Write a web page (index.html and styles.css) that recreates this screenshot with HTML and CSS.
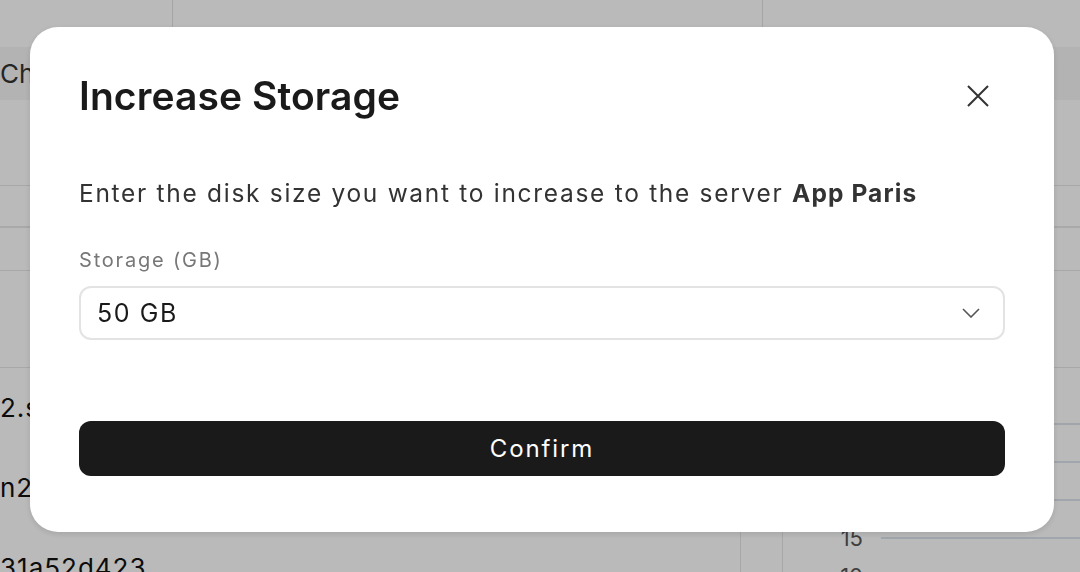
FILE: index.html
```html
<!DOCTYPE html>
<html>

<head>
  <meta charset="utf-8" name="viewport" content="width=device-width, initial-scale=1">
  <title>Increase Storage</title>
  <link rel="stylesheet" href="styles.css">
</head>

<body>
  <div class="backdrop">
    <div class="bgTop">
      <div class="bgCol first"></div>
      <div class="bgCol second"></div>
      <div class="bgCol"></div>
    </div>
    <div class="bgHead">Ch</div>
    <div class="bgRow tall"></div>
    <div class="bgRow strong"></div>
    <div class="bgRow"></div>
    <div class="bgRow big"></div>
    <div class="bgLower">
      <div class="bgList">
        <div class="bgItem">2.s</div>
        <div class="bgItem">n2.</div>
        <div class="bgItem">31a52d423</div>
      </div>
      <div class="bgGap"></div>
      <div class="bgChart">
        <div class="tick"><span>30</span><i></i></div>
        <div class="tick"><span>25</span><i></i></div>
        <div class="tick"><span>20</span><i></i></div>
        <div class="tick"><span>15</span><i></i></div>
        <div class="tick"><span>10</span><i></i></div>
      </div>
    </div>
  </div>

  <div class="overlay">
    <div class="modal">
      <div class="modalHeader">
        <h2 class="modalTitle">Increase Storage</h2>
        <button class="closeBtn" type="button">
          <svg width="22" height="22" viewBox="0 0 22 22" fill="none" stroke="#333" stroke-width="2">
            <path d="M1 1L21 21M21 1L1 21" />
          </svg>
        </button>
      </div>
      <p class="modalText">Enter the disk size you want to increase to the server <b>App Paris</b></p>
      <label class="fieldLabel">Storage (GB)</label>
      <div class="selectBox">
        <span>50 GB</span>
        <svg width="18" height="10" viewBox="0 0 18 10" fill="none" stroke="#555" stroke-width="1.6">
          <path d="M1 1L9 9L17 1" />
        </svg>
      </div>
      <button class="confirmBtn" type="button">Confirm</button>
    </div>
  </div>
</body>

</html>
```

FILE: styles.css
```css
body {
  margin: 0;
  background-color: white;
  font-family: Inter, "Liberation Sans", sans-serif;
  overflow: hidden;
}

/* page behind the dialog */
.backdrop {
  display: flex;
  flex-direction: column;
  height: 572px;
  overflow: hidden;
  color: #111;
}

.backdrop > div {
  flex-shrink: 0;
}

.bgTop {
  display: flex;
  height: 47px;
}

.bgCol {
  flex: 1;
}

.bgCol.first {
  flex: none;
  width: 172px;
  border-right: 1px solid #e2e2e2;
}

.bgCol.second {
  flex: none;
  width: 589px;
  border-right: 1px solid #e2e2e2;
}

.bgHead {
  height: 53px;
  background-color: #f6f6f6;
  font-size: 26px;
  line-height: 53px;
  color: #333;
}

.bgRow {
  height: 42px;
  border-bottom: 1px solid #e6e6e6;
}

.bgRow.tall {
  height: 85px;
}

.bgRow.strong {
  height: 40px;
  border-bottom: 2px solid #e8e8e8;
}

.bgRow.big {
  height: 96px;
}

.bgLower {
  display: flex;
  height: 240px;
}

.bgList {
  width: 740px;
  border-right: 1px solid #e6e6e6;
}

.bgItem {
  height: 80px;
  font-size: 26px;
  line-height: 80px;
  letter-spacing: 1px;
}

.bgGap {
  width: 41px;
  border-right: 1px solid #e6e6e6;
}

.bgChart {
  flex: 1;
  padding-top: 37px;
}

.tick {
  display: flex;
  align-items: center;
  height: 38px;
}

.tick span {
  width: 80px;
  text-align: right;
  font-size: 22px;
  color: #555;
}

.tick i {
  flex: 1;
  margin-left: 18px;
  border-top: 2px solid #dde2ec;
}

/* dialog */
.overlay {
  position: fixed;
  top: 0;
  left: 0;
  right: 0;
  bottom: 0;
  display: flex;
  align-items: center;
  justify-content: center;
  padding: 0 0 13px 4px;
  background-color: rgba(0, 0, 0, 0.27);
}

.modal {
  box-sizing: border-box;
  width: 1024px;
  padding: 47px 49px 56px 49px;
  background-color: white;
  border-radius: 28px;
  box-shadow: 0 2px 6px rgba(0, 0, 0, 0.12);
  display: flex;
  flex-direction: column;
}

.modalHeader {
  display: flex;
  align-items: center;
  justify-content: space-between;
  height: 44px;
}

.modalTitle {
  margin: 0;
  font-size: 39px;
  font-weight: 600;
  line-height: 44px;
  color: #1a1a1a;
  letter-spacing: 0.1px;
}

.closeBtn {
  display: flex;
  align-items: center;
  justify-content: center;
  width: 40px;
  height: 40px;
  margin-right: 7px;
  padding: 0;
  border: none;
  background: none;
  cursor: pointer;
}

.modalText {
  margin: 59px 0 0 0;
  font-size: 24.5px;
  line-height: 32px;
  color: #333;
  letter-spacing: 1.7px;
}

.modalText b {
  font-weight: 700;
  letter-spacing: 1.1px;
}

.fieldLabel {
  display: block;
  margin-top: 37px;
  font-size: 20px;
  line-height: 28px;
  color: #777;
  letter-spacing: 1.8px;
}

.selectBox {
  box-sizing: border-box;
  display: flex;
  align-items: center;
  justify-content: space-between;
  height: 54px;
  margin-top: 12px;
  padding: 0 23px 0 16px;
  border: 2px solid #e3e3e3;
  border-radius: 12px;
  font-size: 25px;
  letter-spacing: 1.6px;
  color: #1a1a1a;
}

.confirmBtn {
  height: 55px;
  margin-top: 81px;
  border: none;
  border-radius: 12px;
  background-color: #1a1a1a;
  color: white;
  font-family: Inter, "Liberation Sans", sans-serif;
  font-size: 24px;
  letter-spacing: 1.9px;
  cursor: pointer;
  text-align: center;
}
```
